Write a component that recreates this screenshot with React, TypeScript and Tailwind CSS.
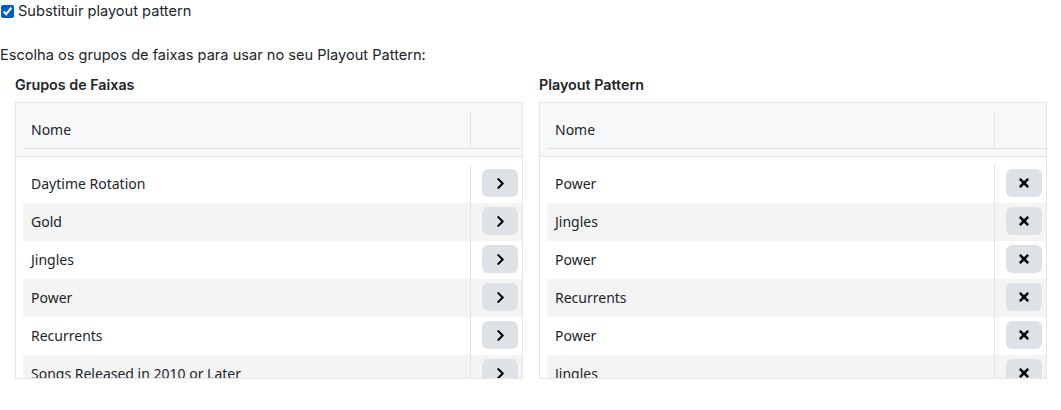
import { FaChevronRight, FaTimes } from "react-icons/fa";

const grupos = ["Daytime Rotation", "Gold", "Jingles", "Power", "Recurrents", "Songs Released in 2010 or Later", "Throwbacks"];
const pattern = ["Power", "Jingles", "Power", "Recurrents", "Power", "Jingles", "Gold"];

function Panel({ title, items, action }: { title: string; items: string[]; action: "add" | "remove" }) {
  return (
    <div className="w-[508px]">
      <h3 className="h-[21px] text-[14.3px] font-semibold leading-[21px] text-[#212529]">{title}</h3>
      <div className="mt-[7px] h-[277px] overflow-hidden border border-[#e4e5e7] bg-white">
        <div className="border-b border-[#e2e3e5] bg-[#f7f8f9] pt-2 pb-[7px] pl-[7px]">
          <div className="flex h-[38px] border-b border-[#e2e3e5] font-['Noto_Sans',sans-serif] text-[#212529]">
            <div className="flex flex-1 items-center pl-2">Nome</div>
            <div className="w-[52px] border-l border-[#e2e3e5]" />
          </div>
        </div>
        <div className="pt-2 pl-[7px] font-['Noto_Sans',sans-serif] text-[#212529]">
          {items.map((item, i) => (
            <div key={i} className={`flex h-[38px] ${i % 2 === 1 ? "bg-[#f4f4f4]" : "bg-white"}`}>
              <div className="flex flex-1 items-center pl-2 pb-[2px]">{item}</div>
              <div className="w-[52px] border-l border-[#e2e3e5] pt-1 pl-[11px]">
                <button className="flex h-[28px] w-[36px] items-center justify-center rounded-md bg-[#dee1e6] text-black">
                  {action === "add" ? <FaChevronRight size={13} /> : <FaTimes size={14} />}
                </button>
              </div>
            </div>
          ))}
        </div>
      </div>
    </div>
  );
}

export default function App() {
  return (
    <div className="min-h-screen bg-white font-['Inter',sans-serif] text-[14px] leading-[21px] text-[#212529]">
      <label className="flex h-[22px] items-center text-[14.6px]">
        <input type="checkbox" defaultChecked className="m-0 ml-[1px] h-[13px] w-[13px]" />
        <span className="ml-[4px]">Substituir playout pattern</span>
      </label>
      <p className="mt-[23px] text-[14.6px]">Escolha os grupos de faixas para usar no seu Playout Pattern:</p>
      <div className="mt-2 flex gap-4 pl-[15px]">
        <Panel title="Grupos de Faixas" items={grupos} action="add" />
        <Panel title="Playout Pattern" items={pattern} action="remove" />
      </div>
    </div>
  );
}
